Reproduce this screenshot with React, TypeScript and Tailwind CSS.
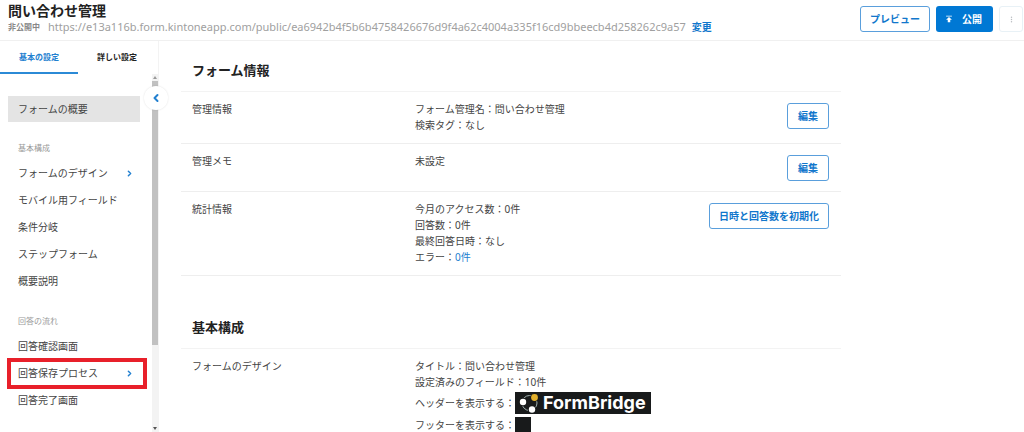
import { useState } from 'react';
import type { ReactNode } from 'react';
import { ChevronLeft, ChevronRight } from 'lucide-react';
import { MdMoreVert, MdPublish } from 'react-icons/md';

interface NavItem {
  label: string;
  expandable?: boolean;
  marked?: boolean;
}

interface NavGroup {
  title: string;
  items: NavItem[];
}

const tabs = ['基本の設定', '詳しい設定'];

const navGroups: NavGroup[] = [
  {
    title: '基本構成',
    items: [
      { label: 'フォームのデザイン', expandable: true },
      { label: 'モバイル用フィールド' },
      { label: '条件分岐' },
      { label: 'ステップフォーム' },
      { label: '概要説明' },
    ],
  },
  {
    title: '回答の流れ',
    items: [
      { label: '回答確認画面' },
      { label: '回答保存プロセス', expandable: true, marked: true },
      { label: '回答完了画面' },
    ],
  },
];

const OutlineButton = ({ children }: { children: ReactNode }) => (
  <button className="h-[26px] min-w-[42px] shrink-0 rounded-[3px] border border-[#5a9fdc] bg-white px-[9px] font-bold text-[#1177cc]">
    {children}
  </button>
);

const Header = () => (
  <header className="flex h-[41px] shrink-0 items-start justify-between border-b border-[#f0f0f0] pl-2 pr-px">
    <div>
      <h1 className="mt-[2px] text-[14px] leading-[18px] font-bold text-[#222]">問い合わせ管理</h1>
      <div className="flex items-center leading-[14px]">
        <span className="mr-2 text-[8px] font-bold text-[#888]">非公開中</span>
        <span className="text-[11px] text-[#a0a0a0]">
          https://e13a116b.form.kintoneapp.com/public/ea6942b4f5b6b4758426676d9f4a62c4004a335f16cd9bbeecb4d258262c9a57
        </span>
        <a href="#" className="ml-[6px] font-bold text-[#1177cc]">
          変更
        </a>
      </div>
    </div>
    <div className="mt-[6px] flex gap-[6px]">
      <OutlineButton>プレビュー</OutlineButton>
      <button className="flex h-[26px] items-center gap-2 rounded-[3px] bg-[#0078d4] px-2 pr-[11px] font-bold text-white">
        <MdPublish size={10} />
        公開
      </button>
      <button
        aria-label="メニュー"
        className="flex h-[26px] w-6 items-center justify-center rounded-[3px] border border-[#e8f1f6] text-[#b8bcc0]"
      >
        <MdMoreVert size={9} />
      </button>
    </div>
  </header>
);

const Sidebar = () => {
  const [activeTab, setActiveTab] = useState(tabs[0]);

  return (
    <aside className="relative flex w-[159px] shrink-0 flex-col border-r border-[#f3f3f3]">
      <div className="flex h-[33px] shrink-0">
        {tabs.map((tab) => (
          <button
            key={tab}
            onClick={() => setActiveTab(tab)}
            className={`w-[78px] border-b-2 text-[8px] font-bold ${
              activeTab === tab ? 'border-[#2b8ad6] text-[#2280d0]' : 'border-transparent text-[#222]'
            }`}
          >
            {tab}
          </button>
        ))}
      </div>

      <div className="flex min-h-0 flex-1">
        <nav className="min-w-0 flex-1 overflow-hidden pt-[22px] pr-3 pl-2">
          <a href="#" className="block h-[26px] bg-[#e4e4e4] px-[10px] leading-[26px]">
            フォームの概要
          </a>
          {navGroups.map((group) => (
            <div key={group.title} className="pt-[18px]">
              <h3 className="mb-1 px-[10px] text-[8px] leading-4 text-[#999]">{group.title}</h3>
              {group.items.map((item) => (
                <a key={item.label} href="#" className="relative flex h-[27px] items-center justify-between px-[10px]">
                  {item.label}
                  {item.expandable && <ChevronRight size={9} strokeWidth={4} className="-mr-1 text-[#2280d0]" />}
                  {item.marked && <span className="absolute -inset-y-[2px] -right-[7px] -left-px border-4 border-[#e8202a]" />}
                </a>
              ))}
            </div>
          ))}
        </nav>
        <div className="flex w-[6px] flex-col items-center bg-[#f3f3f3]">
          <span className="flex h-[7px] items-center text-[#999]">
            <svg width="4" height="3" viewBox="0 0 4 3" fill="currentColor">
              <path d="M2 0L4 3H0z" />
            </svg>
          </span>
          <span className="h-[264px] w-full bg-[#c1c1c1]" />
          <span className="mt-auto flex h-[7px] items-center text-[#555]">
            <svg width="4" height="3" viewBox="0 0 4 3" fill="currentColor">
              <path d="M0 0H4L2 3z" />
            </svg>
          </span>
        </div>
      </div>

      <button
        aria-label="サイドバーを閉じる"
        className="absolute top-[45px] -right-[10px] flex size-6 items-center justify-center rounded-full bg-white text-[#2280d0] shadow-[0_0_2px_rgba(0,0,0,0.12)]"
      >
        <ChevronLeft size={12} strokeWidth={4} />
      </button>
    </aside>
  );
};

interface SectionProps {
  title: string;
  children: ReactNode;
}

const Section = ({ title, children }: SectionProps) => (
  <section className="mb-[41px]">
    <h2 className="border-b border-[#f3f3f3] px-[11px] pb-[11px] text-[13px] leading-5 font-bold text-[#222]">{title}</h2>
    {children}
  </section>
);

interface RowProps {
  label: string;
  action?: string;
  children: ReactNode;
}

const Row = ({ label, action, children }: RowProps) => (
  <div className="flex items-start border-b border-[#eee] pt-[9px] pr-3 pb-[10px] pl-[11px] leading-4">
    <div className="w-[223px] shrink-0">{label}</div>
    <div className="flex-1">{children}</div>
    {action && (
      <div className="mt-[2px] flex">
        <OutlineButton>{action}</OutlineButton>
      </div>
    )}
  </div>
);

const FormBridgeLogo = () => (
  <span className="flex h-[22px] w-[136px] items-center bg-[#181a1b] pl-1 text-white">
    <svg width="20" height="20" viewBox="0 0 20 20" fill="none" className="shrink-0">
      <circle cx="10.5" cy="10" r="7.5" stroke="#9fb0ae" strokeWidth="1" />
      <circle cx="15.5" cy="4.5" r="4.4" fill="#181a1b" />
      <circle cx="4" cy="9" r="4.2" fill="#181a1b" />
      <circle cx="13" cy="16.5" r="4.2" fill="#181a1b" />
      <circle cx="15.5" cy="4.5" r="3.4" fill="#e3b02c" />
      <circle cx="4" cy="9" r="3.2" fill="#fff" />
      <circle cx="13" cy="16.5" r="3.2" fill="#fff" />
    </svg>
    <span className="ml-1 font-[Inter] text-[18px] leading-[22px] font-bold">FormBridge</span>
  </span>
);

const App = () => {
  return (
    <div
      lang="ja"
      className="flex h-screen flex-col overflow-hidden bg-white font-['Noto_Sans','Noto_Sans_CJK_JP',sans-serif] text-[10px] text-[#444]"
    >
      <Header />
      <div className="flex min-h-0 flex-1">
        <Sidebar />
        <main className="min-w-0 flex-1 overflow-hidden pt-[19px] pl-[22px]">
          <div className="max-w-[660px]">
            <Section title="フォーム情報">
              <Row label="管理情報" action="編集">
                <p>フォーム管理名：問い合わせ管理</p>
                <p>検索タグ：なし</p>
              </Row>
              <Row label="管理メモ" action="編集">
                <p>未設定</p>
              </Row>
              <Row label="統計情報" action="日時と回答数を初期化">
                <p>今月のアクセス数：0件</p>
                <p>回答数：0件</p>
                <p>最終回答日時：なし</p>
                <p>
                  エラー：
                  <a href="#" className="text-[#2280d0]">
                    0件
                  </a>
                </p>
              </Row>
            </Section>

            <Section title="基本構成">
              <Row label="フォームのデザイン">
                <p>タイトル：問い合わせ管理</p>
                <p>設定済みのフィールド：10件</p>
                <div className="mt-[2px] flex items-center">
                  ヘッダーを表示する：
                  <FormBridgeLogo />
                </div>
                <div className="mt-[3px] flex items-center">
                  フッターを表示する：
                  <span className="size-4 bg-[#181a1b]" />
                </div>
              </Row>
            </Section>
          </div>
        </main>
      </div>
    </div>
  );
};

export default App;
